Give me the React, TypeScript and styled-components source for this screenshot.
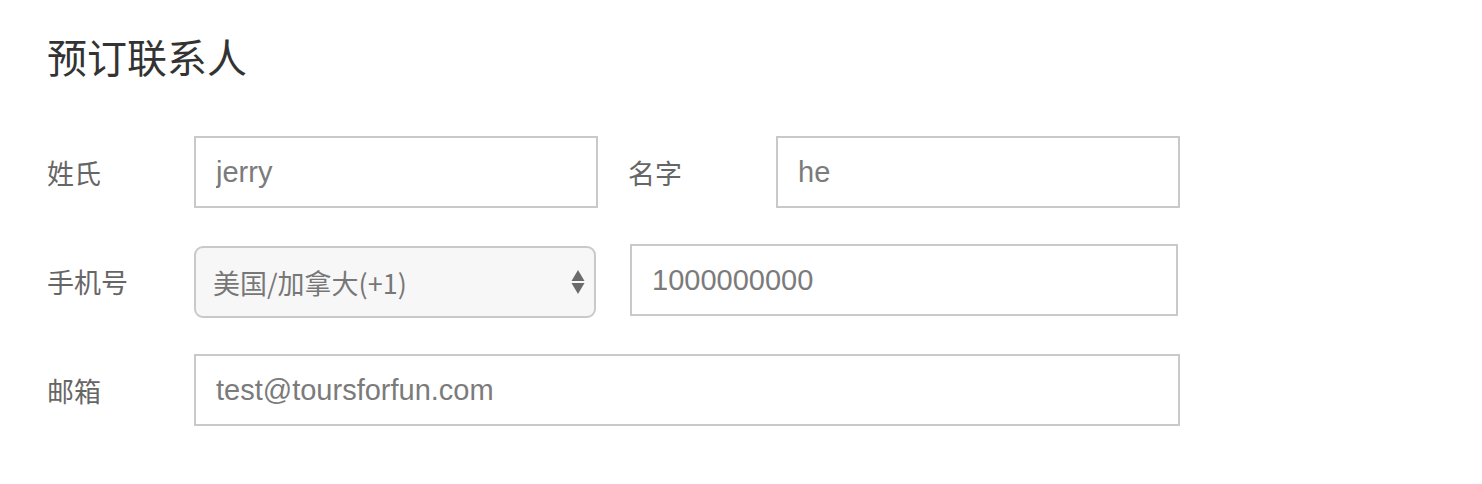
import React from "react";
import styled, { createGlobalStyle } from "styled-components";

const Global = createGlobalStyle`
  html, body { margin: 0; padding: 0; background: #fff; }
  body { font-family: "Liberation Sans", "Noto Sans CJK SC", sans-serif; }
  * { box-sizing: border-box; }
`;

const Page = styled.div`
  padding: 30px 0 0 47px;
  width: 1482px;
  height: 484px;
`;

const Title = styled.h2`
  margin: 0;
  font-family: "Noto Sans CJK SC", sans-serif;
  font-weight: 400;
  font-size: 40px;
  line-height: 52px;
  color: #333;
`;

const Form = styled.div`
  margin-top: 54px;
  display: flex;
  flex-direction: column;
  gap: 36px;
`;

const Row = styled.div`
  display: flex;
  align-items: center;
  height: 72px;
`;

const Label = styled.label<{ $w: number; $ml?: number }>`
  width: ${(p) => p.$w}px;
  margin-left: ${(p) => p.$ml ?? 0}px;
  flex: none;
  font-family: "Noto Sans CJK SC", sans-serif;
  font-size: 27px;
  color: #666;
`;

const Input = styled.input<{ $w: number; $ml?: number }>`
  width: ${(p) => p.$w}px;
  height: 72px;
  margin-left: ${(p) => p.$ml ?? 0}px;
  border: 2px solid #c9c9c9;
  border-radius: 0;
  padding: 0 20px;
  font-family: "Liberation Sans", "Noto Sans CJK SC", sans-serif;
  font-size: 29px;
  color: #7b7b7b;
  background: #fff;
  outline: none;
`;

const Select = styled.div`
  width: 402px;
  height: 72px;
  align-self: flex-end;
  display: flex;
  align-items: center;
  justify-content: space-between;
  padding: 0 9px 0 17px;
  border: 2px solid #c9c9c9;
  border-radius: 9px;
  background: #f7f7f7;
  font-family: "Noto Sans CJK SC", sans-serif;
  font-size: 27px;
  color: #777;
`;

const Arrows = styled.svg`
  width: 14px;
  height: 26px;
  flex: none;
`;

const PhoneInput = styled(Input)`
  align-self: flex-start;
`;

const PhoneRow = styled(Row)`
  height: 74px;
`;

export default function App() {
  return (
    <>
      <Global />
      <Page>
        <Title>预订联系人</Title>
        <Form>
          <Row>
            <Label $w={147}>姓氏</Label>
            <Input $w={404} defaultValue="jerry" />
            <Label $w={148} $ml={30}>名字</Label>
            <Input $w={404} defaultValue="he" />
          </Row>
          <PhoneRow>
            <Label $w={147}>手机号</Label>
            <Select>
              <span>美国/加拿大(+1)</span>
              <Arrows viewBox="0 0 14 26">
                <path d="M7 1 L13.5 12 L0.5 12 Z" fill="#6b6b6b" />
                <path d="M0.5 14 L13.5 14 L7 25 Z" fill="#6b6b6b" />
              </Arrows>
            </Select>
            <PhoneInput $w={548} $ml={34} defaultValue="1000000000" />
          </PhoneRow>
          <Row>
            <Label $w={147}>邮箱</Label>
            <Input $w={986} defaultValue="test@toursforfun.com" />
          </Row>
        </Form>
      </Page>
    </>
  );
}
